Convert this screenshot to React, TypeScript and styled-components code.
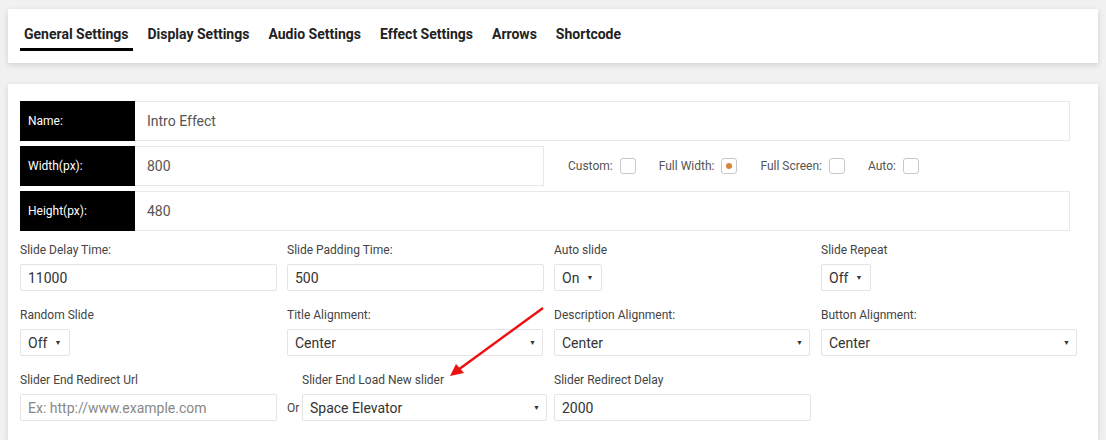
import React from "react";
import styled, { createGlobalStyle } from "styled-components";

const GlobalStyle = createGlobalStyle`
  html, body {
    margin: 0;
    padding: 0;
    background: #f1f1f1;
    font-family: Roboto, "Liberation Sans", Arial, sans-serif;
    overflow: hidden;
  }
`;

const tabs = [
  "General Settings",
  "Display Settings",
  "Audio Settings",
  "Effect Settings",
  "Arrows",
  "Shortcode",
];

function App() {
  return (
    <Page>
      <GlobalStyle />
      <TabsCard>
        {tabs.map((t, i) => (
          <Tab key={t} $active={i === 0}>
            {t}
          </Tab>
        ))}
      </TabsCard>

      <MainCard>
        <InfoRow>
          <BlackLabel>Name:</BlackLabel>
          <WideField>Intro Effect</WideField>
        </InfoRow>
        <InfoRow>
          <BlackLabel>Width(px):</BlackLabel>
          <WideField $width="409px">800</WideField>
          <Options>
            <Option>
              Custom: <Check />
            </Option>
            <Option>
              Full Width:{" "}
              <Check>
                <Dot />
              </Check>
            </Option>
            <Option>
              Full Screen: <Check />
            </Option>
            <Option>
              Auto: <Check />
            </Option>
          </Options>
        </InfoRow>
        <InfoRow>
          <BlackLabel>Height(px):</BlackLabel>
          <WideField>480</WideField>
        </InfoRow>

        <Grid>
          <Cell>
            <Label>Slide Delay Time:</Label>
            <Field>11000</Field>
          </Cell>
          <Cell>
            <Label>Slide Padding Time:</Label>
            <Field>500</Field>
          </Cell>
          <Cell>
            <Label>Auto slide</Label>
            <SmallSelect>
              On <Caret>▼</Caret>
            </SmallSelect>
          </Cell>
          <Cell>
            <Label>Slide Repeat</Label>
            <SmallSelect>
              Off <Caret>▼</Caret>
            </SmallSelect>
          </Cell>

          <Cell>
            <Label>Random Slide</Label>
            <SmallSelect>
              Off <Caret>▼</Caret>
            </SmallSelect>
          </Cell>
          <Cell>
            <Label>Title Alignment:</Label>
            <Select>
              Center <Caret>▼</Caret>
            </Select>
          </Cell>
          <Cell>
            <Label>Description Alignment:</Label>
            <Select>
              Center <Caret>▼</Caret>
            </Select>
          </Cell>
          <Cell>
            <Label>Button Alignment:</Label>
            <Select>
              Center <Caret>▼</Caret>
            </Select>
          </Cell>

          <Cell>
            <Label>Slider End Redirect Url</Label>
            <Field $placeholder>Ex: http://www.example.com</Field>
          </Cell>
          <Cell>
            <Label $indent>Slider End Load New slider</Label>
            <OrRow>
              <OrText>Or</OrText>
              <Select $wide>
                Space Elevator <Caret>▼</Caret>
              </Select>
            </OrRow>
          </Cell>
          <Cell>
            <Label>Slider Redirect Delay</Label>
            <Field>2000</Field>
          </Cell>
        </Grid>

        <Arrow width="110" height="80" viewBox="0 0 110 80">
          <line x1="101" y1="3" x2="16" y2="65" stroke="#e11" strokeWidth="2.5" />
          <polygon points="8,71 14,59 22,68" fill="#e11" />
        </Arrow>
      </MainCard>
    </Page>
  );
}

const Page = styled.div`
  padding: 9px 8px 0;
`;

const TabsCard = styled.div`
  display: flex;
  align-items: flex-start;
  height: 54px;
  padding: 0 12px;
  gap: 11px;
  background: #fff;
  box-shadow: 0 2px 6px rgba(0, 0, 0, 0.14);
`;

const Tab = styled.div<{ $active?: boolean }>`
  display: flex;
  align-items: center;
  height: 42px;
  padding: 10px 4px 0;
  box-sizing: border-box;
  font-size: 14px;
  font-weight: 700;
  color: #222;
  border-bottom: 3px solid ${(p) => (p.$active ? "#000" : "transparent")};
`;

const MainCard = styled.div`
  position: relative;
  margin-top: 21px;
  background: #fff;
  padding: 17px 12px 10px;
  box-sizing: border-box;
  height: 356px;
  box-shadow: 0 2px 6px rgba(0, 0, 0, 0.12);
`;

const InfoRow = styled.div`
  display: flex;
  align-items: center;
  height: 40px;
  margin-bottom: 5px;
`;

const BlackLabel = styled.div`
  width: 115px;
  height: 100%;
  background: #000;
  color: #fff;
  font-size: 12px;
  font-weight: 400;
  display: flex;
  align-items: center;
  padding-left: 8px;
  box-sizing: border-box;
  flex-shrink: 0;
`;

const WideField = styled.div<{ $width?: string }>`
  width: ${(p) => p.$width || "935px"};
  height: 100%;
  border: 1px solid #e8e8e8;
  border-left: none;
  box-sizing: border-box;
  display: flex;
  align-items: center;
  padding-left: 12px;
  font-size: 14px;
  color: #555;
`;

const Options = styled.div`
  display: flex;
  align-items: center;
  gap: 23px;
  margin-left: 24px;
`;

const Option = styled.div`
  display: flex;
  align-items: center;
  gap: 7px;
  font-size: 12px;
  color: #555;
`;

const Check = styled.span`
  width: 16px;
  height: 16px;
  border: 1px solid #c8c8c8;
  border-radius: 3px;
  box-sizing: border-box;
  display: inline-flex;
  align-items: center;
  justify-content: center;
`;

const Dot = styled.span`
  width: 6px;
  height: 6px;
  border-radius: 50%;
  background: #d8823a;
`;

const Grid = styled.div`
  display: grid;
  grid-template-columns: repeat(4, 257px);
  column-gap: 10px;
  row-gap: 17px;
  margin-top: 12px;
`;

const Cell = styled.div`
  display: flex;
  flex-direction: column;
  align-items: flex-start;
`;

const Label = styled.div<{ $indent?: boolean }>`
  font-size: 12px;
  color: #444;
  height: 14px;
  line-height: 14px;
  margin-bottom: 7px;
  padding-left: ${(p) => (p.$indent ? "15px" : "0")};
`;

const Field = styled.div<{ $placeholder?: boolean }>`
  width: 257px;
  height: 27px;
  border: 1px solid #e4e4e4;
  border-radius: 2px;
  box-sizing: border-box;
  display: flex;
  align-items: center;
  padding-left: 7px;
  font-size: 14px;
  color: ${(p) => (p.$placeholder ? "#888" : "#333")};
`;

const Select = styled.div<{ $wide?: boolean }>`
  width: ${(p) => (p.$wide ? "245px" : "256px")};
  height: 27px;
  border: 1px solid #e4e4e4;
  border-radius: 2px;
  box-sizing: border-box;
  display: flex;
  align-items: center;
  justify-content: space-between;
  padding: 0 6px 0 7px;
  font-size: 14px;
  color: #333;
`;

const SmallSelect = styled(Select)`
  width: auto;
  justify-content: flex-start;
  gap: 7px;
  padding: 0 8px 0 7px;
`;

const Caret = styled.span`
  font-size: 7px;
  color: #333;
`;

const OrRow = styled.div`
  display: flex;
  align-items: center;
  gap: 4px;
`;

const OrText = styled.span`
  font-size: 12px;
  color: #444;
  width: 11px;
`;

const Arrow = styled.svg`
  position: absolute;
  left: 434px;
  top: 221px;
`;

export default App;
